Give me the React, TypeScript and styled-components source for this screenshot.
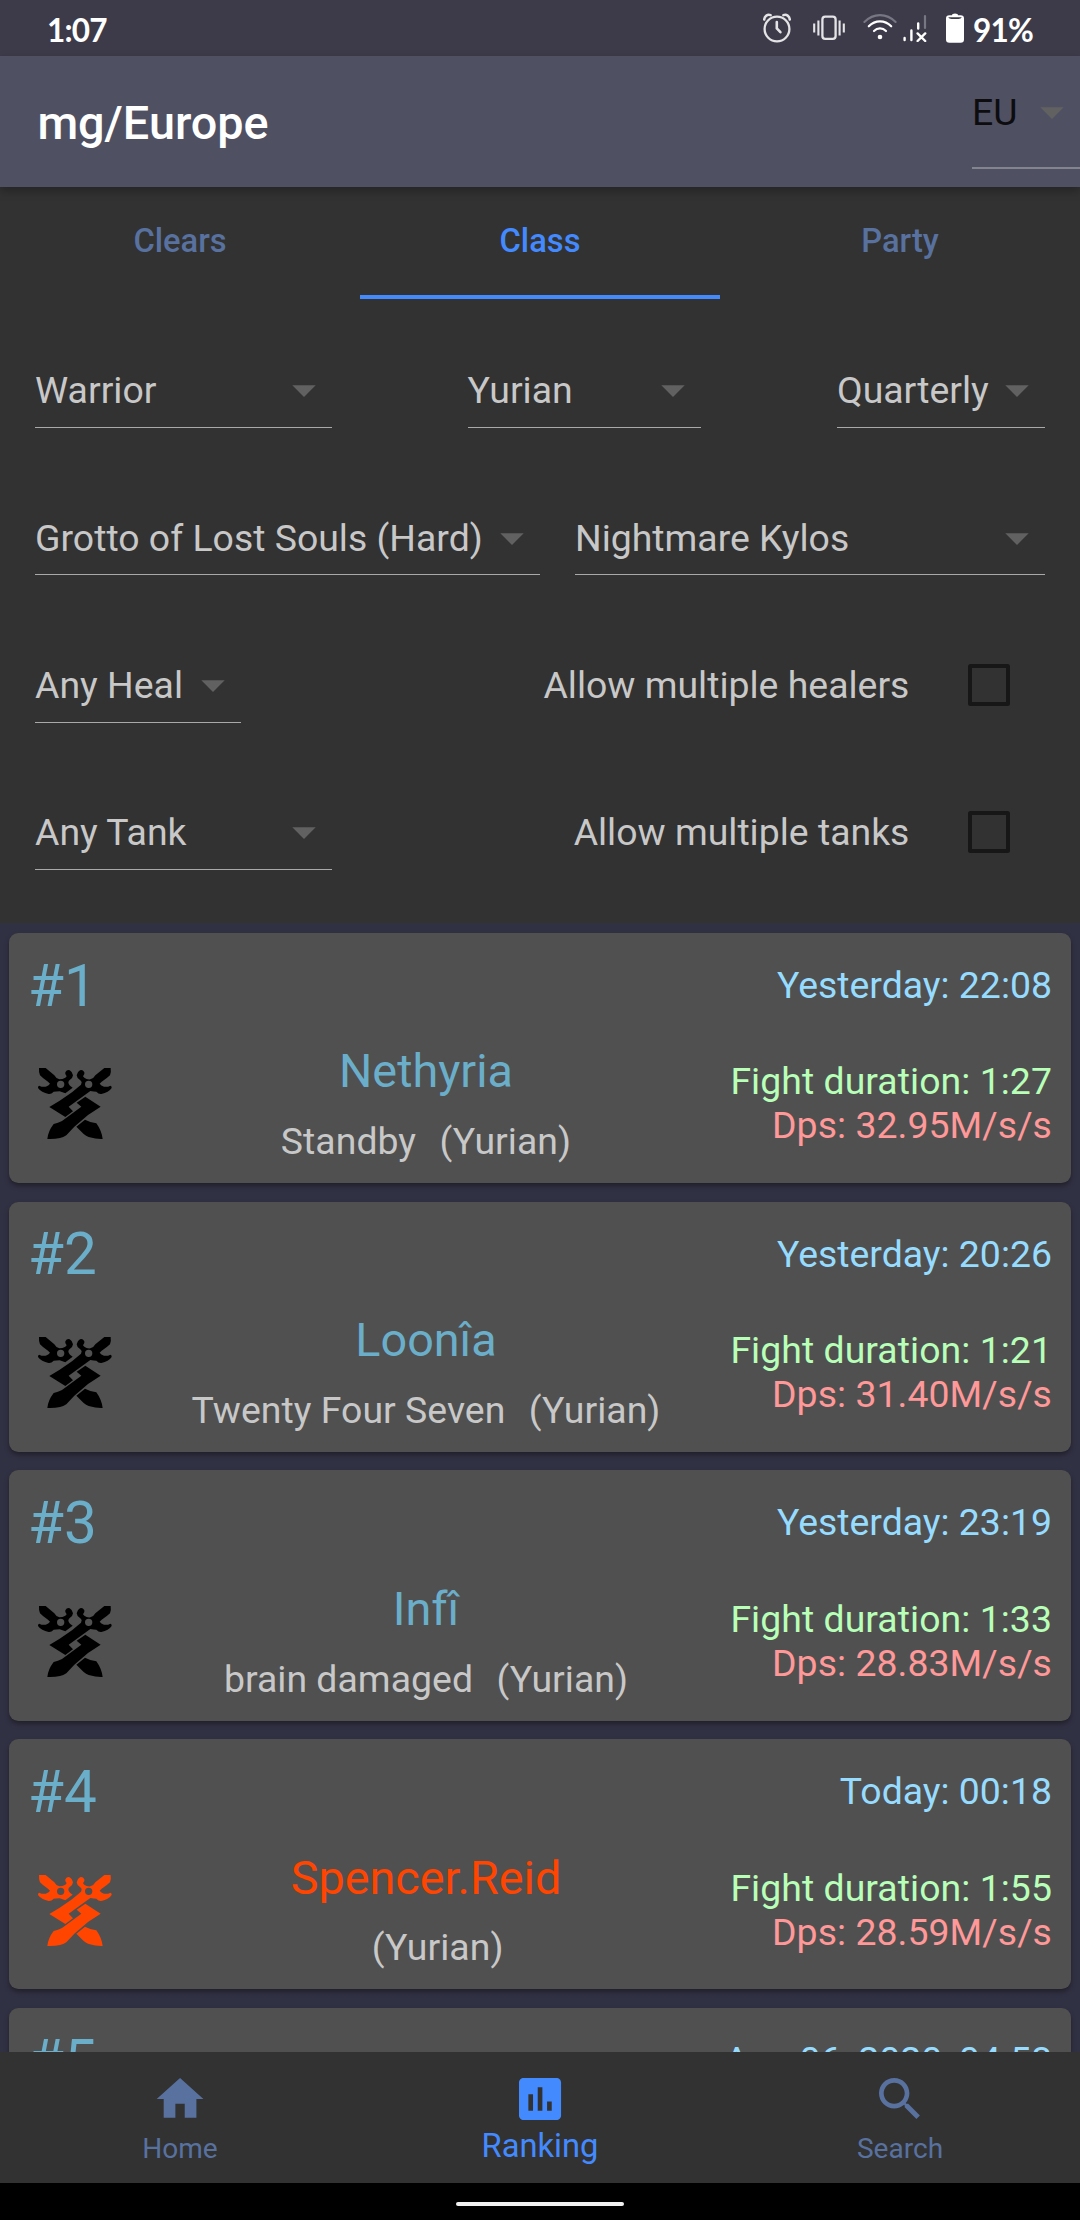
import React from "react";
import styled, { createGlobalStyle } from "styled-components";

const GlobalStyle = createGlobalStyle`
  body {
    margin: 0;
    background: #000;
    font-family: Roboto, "Noto Sans", sans-serif;
    -webkit-font-smoothing: antialiased;
  }
  * { box-sizing: border-box; }
`;

const Screen = styled.div`
  width: 1080px;
  height: 2220px;
  display: flex;
  flex-direction: column;
  overflow: hidden;
  background: #313144;
`;

const StatusBar = styled.header`
  height: 56px;
  flex: none;
  display: flex;
  align-items: center;
  padding: 0 47px 0 47px;
  background: #3d3b49;
  color: #fff;
`;

const StatusText = styled.span`
  font-family: Lato, sans-serif;
  font-weight: 700;
  font-size: 31.5px;
  line-height: 56px;
  letter-spacing: -0.8px;
  padding-top: 3px;
`;

const StatusIcons = styled.div`
  margin-left: auto;
  display: flex;
  align-items: center;
  height: 56px;
  & > svg { display: block; flex: none; }
`;

const AppBar = styled.div`
  height: 131px;
  flex: none;
  display: flex;
  align-items: flex-start;
  justify-content: space-between;
  padding-left: 37.4px;
  background: #505063;
  color: #fff;
  box-shadow: 0 4px 9px rgba(0, 0, 0, 0.28);
  z-index: 1;
`;

const Title = styled.h1`
  margin: 0;
  font-size: 46.75px;
  font-weight: 500;
  line-height: 135px;
`;

const Panel = styled.section`
  height: 736px;
  flex: none;
  background: #323232;
`;

const Tabs = styled.nav`
  height: 112.2px;
  display: grid;
  grid-template-columns: repeat(3, 1fr);
`;

const Tab = styled.div<{ $active?: boolean }>`
  font-size: 32.7px;
  font-weight: 500;
  line-height: 109px;
  height: 112.2px;
  text-align: center;
  color: ${(p) => (p.$active ? "#448aff" : "#58719f")};
  border-bottom: 4.7px solid ${(p) => (p.$active ? "#448aff" : "transparent")};
`;

const Filters = styled.div`
  padding: 35.06px;
  display: flex;
  flex-direction: column;
  gap: 35.06px;
`;

const FilterRow = styled.div`
  height: 112.2px;
  display: flex;
  align-items: center;
  justify-content: space-between;
`;

const SelectBox = styled.div<{ $width: number; $dark?: boolean }>`
  width: ${(p) => p.$width}px;
  height: 112.2px;
  flex: none;
  color: ${(p) => (p.$dark ? "#0d0d10" : "#c8c8c8")};
`;

const SelectLine = styled.div<{ $dark?: boolean }>`
  height: ${(p) => (p.$dark ? "113px" : "94px")};
  border-bottom: ${(p) => (p.$dark ? "2px solid #84848f" : "1.4px solid #a9a9a9")};
`;

const SelectValue = styled.div`
  height: 112.2px;
  display: flex;
  align-items: center;
  justify-content: space-between;
  font-size: 37.4px;
  white-space: nowrap;
  & > svg { flex: none; width: 56px; height: 56px; fill: #616161; }
`;

const CheckGroup = styled.label`
  display: flex;
  align-items: center;
  gap: 23.4px;
  font-size: 37.4px;
  color: #c8c8c8;
`;

const CheckTarget = styled.span`
  width: 112.2px;
  height: 112.2px;
  display: flex;
  align-items: center;
  justify-content: center;
`;

const CheckSquare = styled.span`
  width: 42px;
  height: 42px;
  border: 4.5px solid #171717;
  border-radius: 2.5px;
`;

const List = styled.main`
  height: 1129px;
  flex: none;
  overflow: hidden;
  padding: 9.9px 9.35px 0;
  display: flex;
  flex-direction: column;
  gap: 18.7px;
  background: #313144;
`;

const Card = styled.article`
  height: 250.1px;
  flex: none;
  padding: 18.7px;
  border-radius: 9.35px;
  background: #505050;
  box-shadow: 0 3px 5px rgba(0, 0, 0, 0.36);
`;

const CardHead = styled.div`
  height: 68.5px;
  display: flex;
  align-items: center;
  justify-content: space-between;
`;

const Rank = styled.span`
  font-size: 58.4px;
  line-height: 68.5px;
  color: #6baeca;
`;

const When = styled.span`
  font-size: 37.4px;
  line-height: 43.8px;
  color: #97dcff;
`;

const CardBody = styled.div`
  margin-top: 23.7px;
  height: 120.8px;
  display: flex;
  align-items: center;
`;

const ClassIcon = styled.svg<{ $color: string }>`
  width: 93.5px;
  height: 93.5px;
  flex: none;
  color: ${(p) => p.$color};
`;

const Player = styled.div`
  flex: 1;
  display: flex;
  flex-direction: column;
  align-items: center;
  gap: 20.8px;
`;

const PlayerName = styled.div<{ $color: string }>`
  font-size: 46.75px;
  line-height: 54.8px;
  color: ${(p) => p.$color};
`;

const Guild = styled.div`
  display: flex;
  gap: 23.4px;
  font-size: 37.4px;
  line-height: 43.8px;
  letter-spacing: 0.03px;
  color: #c8c8c8;
  white-space: nowrap;
`;

const Stats = styled.div`
  font-size: 37.4px;
  line-height: 43.8px;
  letter-spacing: 0.05px;
  text-align: right;
  white-space: nowrap;
`;

const Duration = styled.div`
  color: #b8ffb8;
`;

const Dps = styled.div`
  color: #ff9898;
`;

const BottomNav = styled.nav`
  height: 131px;
  flex: none;
  display: grid;
  grid-template-columns: repeat(3, 1fr);
  background: #323232;
`;

const NavItem = styled.div<{ $active?: boolean }>`
  display: flex;
  flex-direction: column;
  align-items: center;
  padding-top: 18.7px;
  font-size: ${(p) => (p.$active ? 32.7 : 28.05)}px;
  line-height: ${(p) => (p.$active ? 38 : 44)}px;
  color: ${(p) => (p.$active ? "#448aff" : "#58719f")};
  & > svg { width: 56.1px; height: 56.1px; fill: currentColor; flex: none; }
`;

const GestureBar = styled.footer`
  height: 37px;
  flex: none;
  display: flex;
  justify-content: center;
  padding-top: 19px;
  background: #000;
`;

const Handle = styled.div`
  width: 168px;
  height: 4px;
  border-radius: 2px;
  background: #f1f1f1;
`;

const AlarmIcon = () => (
  <svg width="28" height="30" viewBox="0 0 28 30" fill="none" stroke="#e4e4e6" strokeWidth="2.3" strokeLinecap="round">
    <circle cx="14" cy="16" r="12.4" />
    <path d="M13.8 9V15.4L17.4 19.2" strokeWidth="2.6" strokeLinejoin="round" />
    <path d="M1.2 6.6C1.4 3 4.6 1 7.6 2.2M26.8 6.6C26.6 3 23.4 1 20.4 2.2" strokeWidth="2.5" />
  </svg>
);

const VibrateIcon = () => (
  <svg width="32" height="26" viewBox="0 0 32 26" fill="none" stroke="#e4e4e6">
    <rect x="9.4" y="1.7" width="13.2" height="22.2" rx="2.8" strokeWidth="2.3" />
    <path d="M1.2 8.5V17.5M30.8 8.5V17.5M5.4 5.5V20.5M26.6 5.5V20.5" strokeWidth="2.1" />
  </svg>
);

const WifiIcon = () => (
  <svg width="34" height="28" viewBox="0 0 34 28" fill="none" strokeLinecap="round">
    <path d="M1.4 8C10.4 -1.2 23.6 -1.2 32.6 8" stroke="#777683" strokeWidth="2.1" />
    <path d="M5.8 12.3C12.2 5.7 21.8 5.7 28.2 12.3M11 17C14.4 13.6 19.6 13.6 23 17" stroke="#fff" strokeWidth="2.2" />
    <circle cx="17" cy="23" r="2.3" fill="#fff" />
  </svg>
);

const SignalIcon = () => (
  <svg width="24" height="28" viewBox="0 0 24 28" fill="none" strokeLinecap="round">
    <path d="M1.6 24V26M8.4 16.5V26M15.2 9.5V14.5" stroke="#fff" strokeWidth="2.4" />
    <path d="M22 2V14" stroke="#777683" strokeWidth="2.2" />
    <path d="M14.6 19.4L22.2 27M22.2 19.4L14.6 27" stroke="#fff" strokeWidth="2.4" />
  </svg>
);

const BatteryIcon = () => (
  <svg width="18" height="30" viewBox="0 0 18 30">
    <path d="M6 2.2Q6 .4 9 .4Q12 .4 12 2.2H14.6Q18 2.2 18 5.4V26.6Q18 29.8 14.6 29.8H3.4Q0 29.8 0 26.6V5.4Q0 2.2 3.4 2.2Z" fill="#fff" />
    <path d="M2.2 4.2H15.8Q15 5.9 12.5 5.9H5.5Q3 5.9 2.2 4.2Z" fill="#3d3b49" />
  </svg>
);

const Gap = styled.span<{ $w: number }>`
  width: ${(p) => p.$w}px;
`;

const Caret = () => (
  <svg viewBox="0 0 24 24">
    <path d="M7 10l5 5 5-5z" />
  </svg>
);

const WarriorMark = ({ color }: { color: string }) => (
  <ClassIcon viewBox="24 21 280.5 280.5" $color={color}>
    <g fill="currentColor" fillRule="evenodd">
      <path d="M57 54H77L103 76Q108 86 118 88Q128 88 136 83L140 79Q134 74 136 67Q141 58 149 61Q158 66 159 76Q158 85 150 89Q145 92 145 98Q146 103 150 107L158 113L136 130L119 124Q108 125 101 125Q94 133 86 132Q64 128 54 114Q53 108 58 107Q67 112 77 110Q86 107 90 101L84 95Q69 86 60 76Q56 66 57 54ZM122 92A11 11 0 1 0 122 114A11 11 0 1 0 122 92Z" />
      <path d="M272 54H253L226 76Q221 86 211 88Q200 89 193 83L189 79Q195 74 193 67Q188 58 180 61Q171 66 170 76Q171 85 179 89Q184 92 185 97L183 104L156 127L119 152L88 171L136 201L159 184L146 170L211 123Q222 125 229 125Q236 133 244 132Q266 128 275 114Q276 108 271 107Q262 112 252 110Q243 107 239 101L245 95Q260 86 270 76Q274 66 272 54ZM206 92A11 11 0 1 0 206 114A11 11 0 1 0 206 92Z" />
      <path d="M196 140L242 170L204 195L163 230L139 256Q130 262 120 264Q103 268 82 267Q84 244 101 222Q114 219 126 213L184 170L170 158Z" />
      <path d="M195 209Q210 217 229 220Q245 242 248 267Q230 268 206 261Q198 258 191 252L169 230Z" />
    </g>
  </ClassIcon>
);

type SelectProps = { label: string; width: number; dark?: boolean };

const Select = ({ label, width, dark }: SelectProps) => (
  <SelectBox $width={width} $dark={dark}>
    <SelectLine $dark={dark}>
      <SelectValue>
        <span>{label}</span>
        <Caret />
      </SelectValue>
    </SelectLine>
  </SelectBox>
);

const Check = ({ label }: { label: string }) => (
  <CheckGroup>
    <span>{label}</span>
    <CheckTarget>
      <CheckSquare />
    </CheckTarget>
  </CheckGroup>
);

type Entry = {
  name: string;
  guild: string;
  when: string;
  duration: string;
  dps: string;
  highlight?: boolean;
};

const entries: Entry[] = [
  { name: "Nethyria", guild: "Standby", when: "Yesterday: 22:08", duration: "1:27", dps: "32.95M/s/s" },
  { name: "Loonîa", guild: "Twenty Four Seven", when: "Yesterday: 20:26", duration: "1:21", dps: "31.40M/s/s" },
  { name: "Infî", guild: "brain damaged", when: "Yesterday: 23:19", duration: "1:33", dps: "28.83M/s/s" },
  { name: "Spencer.Reid", guild: "", when: "Today: 00:18", duration: "1:55", dps: "28.59M/s/s", highlight: true },
];

export default function App() {
  return (
    <>
      <GlobalStyle />
      <Screen>
        <StatusBar>
          <StatusText>1:07</StatusText>
          <StatusIcons>
            <AlarmIcon />
            <Gap $w={22} />
            <VibrateIcon />
            <Gap $w={18} />
            <WifiIcon />
            <Gap $w={6} />
            <SignalIcon />
            <Gap $w={19} />
            <BatteryIcon />
            <Gap $w={9} />
            <StatusText>91%</StatusText>
          </StatusIcons>
        </StatusBar>
        <AppBar>
          <Title>mg/Europe</Title>
          <Select label="EU" width={108} dark />
        </AppBar>
        <Panel>
          <Tabs>
            <Tab>Clears</Tab>
            <Tab $active>Class</Tab>
            <Tab>Party</Tab>
          </Tabs>
          <Filters>
            <FilterRow>
              <Select label="Warrior" width={297} />
              <Select label="Yurian" width={233.8} />
              <Select label="Quarterly" width={208} />
            </FilterRow>
            <FilterRow>
              <Select label="Grotto of Lost Souls (Hard)" width={504.6} />
              <Select label="Nightmare Kylos" width={470} />
            </FilterRow>
            <FilterRow>
              <Select label="Any Heal" width={206} />
              <Check label="Allow multiple healers" />
            </FilterRow>
            <FilterRow>
              <Select label="Any Tank" width={297} />
              <Check label="Allow multiple tanks" />
            </FilterRow>
          </Filters>
        </Panel>
        <List>
          {entries.map((e, i) => (
            <Card key={e.name}>
              <CardHead>
                <Rank>#{i + 1}</Rank>
                <When>{e.when}</When>
              </CardHead>
              <CardBody>
                <WarriorMark color={e.highlight ? "#ff4500" : "#000"} />
                <Player>
                  <PlayerName $color={e.highlight ? "#ff4500" : "#6baeca"}>{e.name}</PlayerName>
                  <Guild>
                    <span>{e.guild}</span>
                    <span>(Yurian)</span>
                  </Guild>
                </Player>
                <Stats>
                  <Duration>Fight duration: {e.duration}</Duration>
                  <Dps>Dps: {e.dps}</Dps>
                </Stats>
              </CardBody>
            </Card>
          ))}
          <Card>
            <CardHead>
              <Rank>#5</Rank>
              <When>Aug 06, 2020, 04:58</When>
            </CardHead>
          </Card>
        </List>
        <BottomNav>
          <NavItem>
            <svg viewBox="0 0 24 24"><path d="M10 20v-6h4v6h5v-8h3L12 3 2 12h3v8z" /></svg>
            <span>Home</span>
          </NavItem>
          <NavItem $active>
            <svg viewBox="0 0 24 24"><path d="M19 3H5c-1.1 0-2 .9-2 2v14c0 1.1.9 2 2 2h14c1.1 0 2-.9 2-2V5c0-1.1-.9-2-2-2zM9 17H7v-7h2v7zm4 0h-2V7h2v10zm4 0h-2v-4h2v4z" /></svg>
            <span>Ranking</span>
          </NavItem>
          <NavItem>
            <svg viewBox="0 0 24 24"><path d="M15.5 14h-.79l-.28-.27C15.41 12.59 16 11.11 16 9.5 16 5.91 13.09 3 9.5 3S3 5.91 3 9.5 5.91 16 9.5 16c1.61 0 3.09-.59 4.23-1.57l.27.28v.79l5 4.99L20.49 19l-4.99-5zm-6 0C7.01 14 5 11.99 5 9.5S7.01 5 9.5 5 14 7.01 14 9.5 11.99 14 9.5 14z" /></svg>
            <span>Search</span>
          </NavItem>
        </BottomNav>
        <GestureBar>
          <Handle />
        </GestureBar>
      </Screen>
    </>
  );
}
